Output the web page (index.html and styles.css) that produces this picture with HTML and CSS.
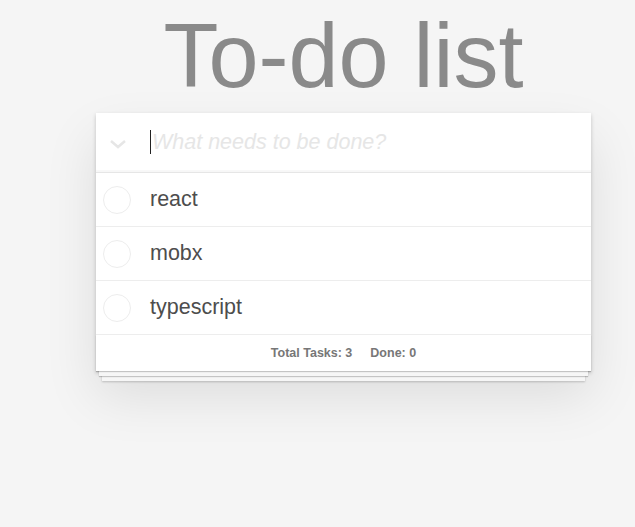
FILE: index.html
```html
<!DOCTYPE html>
<html>
<head>
<meta charset="utf-8">
<link rel="stylesheet" href="styles.css">
</head>
<body>
<main class="page">
  <h1 class="title">To-do list</h1>
  <section class="todoapp">
    <header class="new-row">
      <span class="toggle-all">
        <svg width="18" height="10" viewBox="0 0 18 10"><path d="M2 2 L9 8 L16 2" fill="none" stroke="#e6e6e6" stroke-width="2.5"/></svg>
      </span>
      <div class="new-todo"><span class="caret"></span><span class="placeholder">What needs to be done?</span></div>
    </header>
    <ul class="todo-list">
      <li class="todo"><span class="check"></span><span class="label">react</span></li>
      <li class="todo"><span class="check"></span><span class="label">mobx</span></li>
      <li class="todo"><span class="check"></span><span class="label">typescript</span></li>
    </ul>
    <footer class="footer">
      <span>Total Tasks: 3</span>
      <span>Done: 0</span>
    </footer>
  </section>
</main>
</body>
</html>
```
FILE: styles.css
```css
html, body {
  margin: 0;
  padding: 0;
}
html {
  background: #f5f5f5;
}
body {
  min-height: 100vh;
  background: #f5f5f5;
  font-family: "Liberation Sans", Arial, sans-serif;
  color: #4d4d4d;
}
.page {
  padding-left: 96px;
  padding-bottom: 100px;
  width: 495px;
}
.title {
  margin: 11px 0 12px;
  font-size: 90px;
  line-height: 90px;
  height: 90px;
  font-weight: normal;
  text-align: center;
  color: #8a8a8a;
}
.todoapp {
  position: relative;
  background: #fff;
  width: 495px;
  box-shadow: 0 2px 4px 0 rgba(0,0,0,0.2), 0 25px 50px 0 rgba(0,0,0,0.1);
}
.new-row {
  display: flex;
  align-items: center;
  height: 59px;
  border-bottom: 1px solid #e6e6e6;
  box-shadow: inset 0 -2px 1px rgba(0,0,0,0.03);
}
.toggle-all {
  width: 44px;
  display: flex;
  justify-content: center;
  padding-top: 2px;
}
.new-todo {
  display: flex;
  align-items: center;
  margin-left: 10px;
  margin-top: -1px;
  font-size: 21.5px;
  font-style: italic;
}
.caret {
  display: inline-block;
  width: 1px;
  height: 24px;
  background: #222;
  margin-right: 1px;
}
.placeholder {
  color: #e6e6e6;
}
.todo-list {
  list-style: none;
  margin: 0;
  padding: 0;
}
.todo {
  display: flex;
  align-items: center;
  height: 53px;
  border-bottom: 1px solid #ededed;
  font-size: 21.5px;
}
.check {
  width: 26px;
  height: 26px;
  border: 1px solid #ededed;
  border-radius: 50%;
  margin-left: 7px;
  margin-right: 19px;
  flex: none;
}
.label {
  color: #4d4d4d;
}
.footer {
  position: relative;
  box-sizing: border-box;
  display: flex;
  justify-content: center;
  gap: 18px;
  height: 36px;
  align-items: center;
  font-size: 12.5px;
  font-weight: bold;
  color: #777;
  padding-bottom: 1px;
}
.footer span {
  position: relative;
  z-index: 1;
}
.footer::before {
  content: '';
  position: absolute;
  left: 0;
  right: 0;
  bottom: 0;
  height: 36px;
  box-shadow: 0 1px 1px rgba(0,0,0,0.2), 0 8px 0 -3px #f6f6f6, 0 9px 1px -3px rgba(0,0,0,0.2), 0 16px 0 -6px #f6f6f6, 0 17px 2px -6px rgba(0,0,0,0.2);
}
```
